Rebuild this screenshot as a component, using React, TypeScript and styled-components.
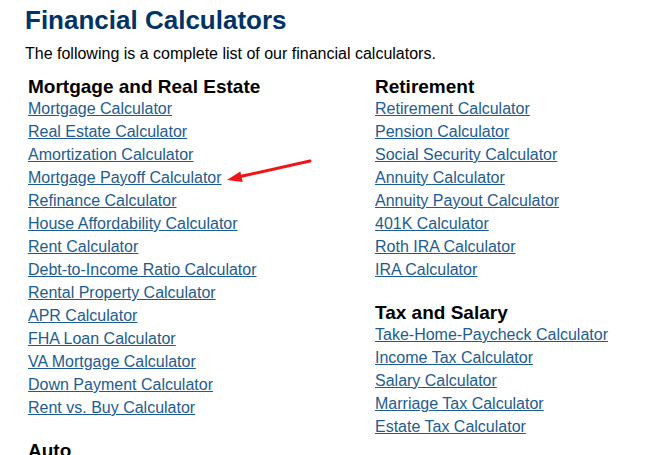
import React from "react";
import styled, { createGlobalStyle } from "styled-components";

const GlobalStyle = createGlobalStyle`
  html, body {
    margin: 0;
    padding: 0;
    background: #fff;
  }
  body {
    font-family: "Liberation Sans", Arial, sans-serif;
    color: #000;
  }
`

type Section = {
   title: string
   links: string[]
}

const leftCol: Section[] = [
   {
      title: "Mortgage and Real Estate",
      links: [
         "Mortgage Calculator",
         "Real Estate Calculator",
         "Amortization Calculator",
         "Mortgage Payoff Calculator",
         "Refinance Calculator",
         "House Affordability Calculator",
         "Rent Calculator",
         "Debt-to-Income Ratio Calculator",
         "Rental Property Calculator",
         "APR Calculator",
         "FHA Loan Calculator",
         "VA Mortgage Calculator",
         "Down Payment Calculator",
         "Rent vs. Buy Calculator",
      ],
   },
   {
      title: "Auto",
      links: ["Auto Loan Calculator", "Cash Back or Low Interest Calculator"],
   },
]

const rightCol: Section[] = [
   {
      title: "Retirement",
      links: [
         "Retirement Calculator",
         "Pension Calculator",
         "Social Security Calculator",
         "Annuity Calculator",
         "Annuity Payout Calculator",
         "401K Calculator",
         "Roth IRA Calculator",
         "IRA Calculator",
      ],
   },
   {
      title: "Tax and Salary",
      links: [
         "Take-Home-Paycheck Calculator",
         "Income Tax Calculator",
         "Salary Calculator",
         "Marriage Tax Calculator",
         "Estate Tax Calculator",
      ],
   },
]

const App = () => {
   const renderCol = (sections: Section[]) => (
      <Column>
         {sections.map((s) => (
            <Block key={s.title}>
               <Heading>{s.title}</Heading>
               {s.links.map((l) => (
                  <Link key={l} href="#">{l}</Link>
               ))}
            </Block>
         ))}
      </Column>
   )

   return (
      <Page>
         <GlobalStyle />
         <Title>Financial Calculators</Title>
         <Intro>The following is a complete list of our financial calculators.</Intro>
         <Grid>
            {renderCol(leftCol)}
            {renderCol(rightCol)}
         </Grid>
         {/* annotation arrow drawn over the list */}
         <Arrow width="647" height="455" viewBox="0 0 647 455">
            <line x1="310" y1="161" x2="238" y2="177" stroke="#f01414" strokeWidth="3" strokeLinecap="round" />
            <polygon points="227,180 242.7,182 240.3,171.4" fill="#f01414" />
         </Arrow>
      </Page>
   )
}

const Page = styled.div`
    position: relative;
    height: 455px;
    overflow: hidden;
    padding: 5px 0 0 25px;
    box-sizing: border-box;
`

const Title = styled.h1`
    margin: 0;
    font-size: 26px;
    line-height: 30px;
    font-weight: bold;
    color: #003366;
`

const Intro = styled.p`
    margin: 9px 0 0;
    font-size: 16px;
    line-height: 20px;
`

const Grid = styled.div`
    display: grid;
    grid-template-columns: 347px 260px;
    margin-top: 13px;
    padding-left: 3px;
`

const Column = styled.div`
    display: flex;
    flex-direction: column;
`

const Block = styled.div`
    display: flex;
    flex-direction: column;
    align-items: flex-start;
    margin-bottom: 22px;
`

const Heading = styled.h3`
    margin: 0;
    font-size: 19px;
    line-height: 20px;
    font-weight: bold;
`

const Link = styled.a`
    display: block;
    font-size: 16px;
    line-height: 23px;
    color: #1d5c91;
    text-decoration: underline;
    white-space: nowrap;
`

const Arrow = styled.svg`
    position: absolute;
    left: 0;
    top: 0;
    pointer-events: none;
`

export default App
